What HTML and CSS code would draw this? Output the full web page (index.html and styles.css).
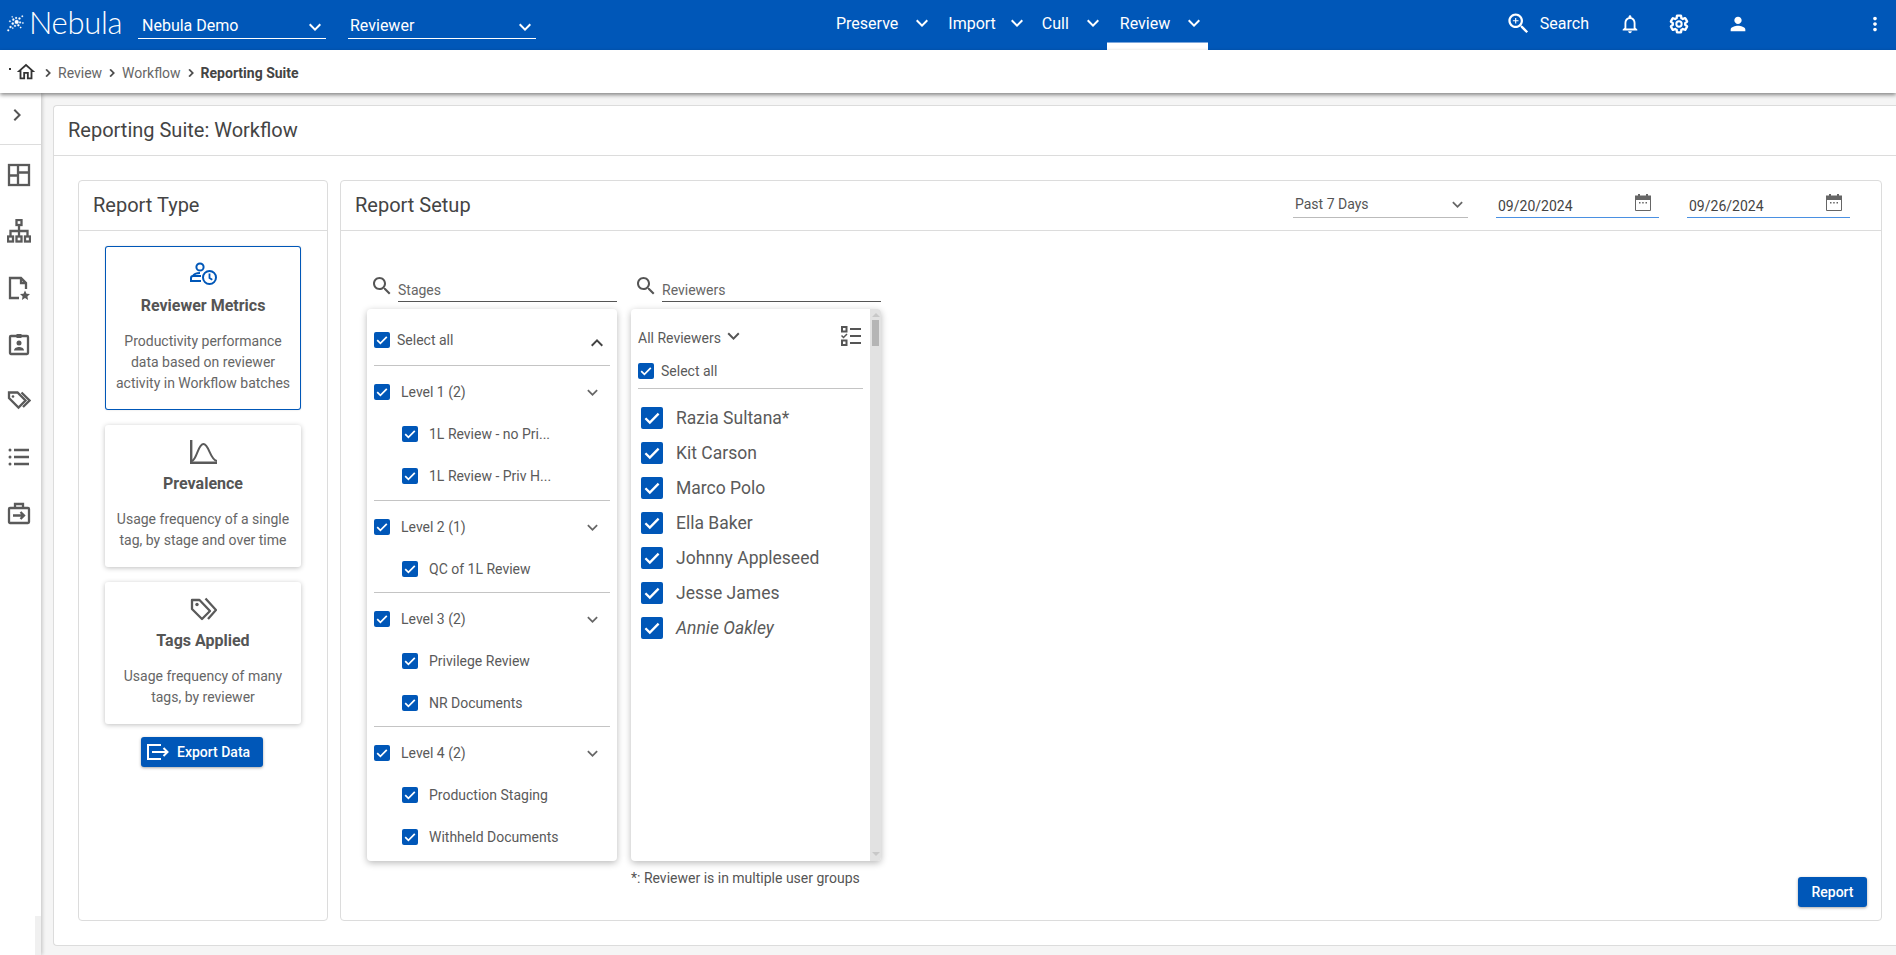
FILE: index.html
```html
<!DOCTYPE html>
<html lang="en">
<head>
<meta charset="utf-8">
<title>Reporting Suite: Workflow</title>
<link rel="stylesheet" href="styles.css">
</head>
<body>
<svg class="defs" aria-hidden="true">
  <symbol id="chev-down" viewBox="6 8 12 8"><path d="M16.59 8.59L12 13.17 7.41 8.59 6 10l6 6 6-6z"/></symbol>
  <symbol id="chev-up" viewBox="6 8 12 8"><path d="M12 8l-6 6 1.41 1.41L12 10.83l4.59 4.58L18 14z"/></symbol>
  <symbol id="chev-right" viewBox="0 0 24 24"><path d="M10 6L8.59 7.41 13.17 12l-4.58 4.59L10 18l6-6z"/></symbol>
  <symbol id="search" viewBox="0 0 24 24"><path d="M15.5 14h-.79l-.28-.27C15.41 12.59 16 11.11 16 9.5 16 5.91 13.09 3 9.5 3S3 5.91 3 9.5 5.91 16 9.5 16c1.61 0 3.09-.59 4.23-1.57l.27.28v.79l5 4.99L20.49 19l-4.99-5zm-6 0C7.01 14 5 11.99 5 9.5S7.01 5 9.5 5 14 7.01 14 9.5 11.99 14 9.5 14z"/></symbol>
  <symbol id="check" viewBox="0 0 16 16"><path d="M3.2 8.2l3.2 3.2 6.4-6.6" fill="none" stroke="#fff" stroke-width="1.7"/></symbol>
  <symbol id="calendar" viewBox="0 0 16 17"><path d="M3 0h2v1.500h6V0h2v1.500h3V6H0V1.500h3z" fill="#666"/><path d="M.5 5v11.500h15V5" fill="none" stroke="#666"/><path d="M4 8h1.500v1.500H4zM7.200 8h1.500v1.500H7.200zM10.500 8H12v1.500h-1.500z" fill="#666"/></symbol>
</svg>

<header class="topbar">
  <div class="logo">
    <svg class="logo-mark" viewBox="0 0 16 16" aria-hidden="true">
      <g fill="#fff" stroke="#fff" stroke-width=".25">
        <circle cx="9.500" cy="7" r="1.700"/><circle cx="6.500" cy="5" r=".9"/><circle cx="6" cy="8.500" r="1"/><circle cx="9" cy="3.500" r=".8"/><circle cx="12" cy="4" r=".9"/><circle cx="12.500" cy="7.500" r=".8"/><circle cx="11" cy="10" r=".9"/><circle cx="8" cy="10.500" r=".8"/><circle cx="4" cy="11.500" r=".9"/><circle cx="3.500" cy="6.500" r=".7"/><circle cx="14.500" cy="2" r=".7"/><circle cx="2" cy="14.500" r=".8"/><circle cx="15" cy="8" r=".6"/><circle cx="6" cy="12.500" r=".6"/><circle cx="13" cy="12" r=".6"/><circle cx="5.500" cy="2.500" r=".5"/>
      </g>
    </svg>
    <span class="logo-text">Nebula</span>
  </div>
  <div class="top-select"><span>Nebula Demo</span><svg class="ic-chev"><use href="#chev-down"/></svg></div>
  <div class="top-select top-select--second"><span>Reviewer</span><svg class="ic-chev"><use href="#chev-down"/></svg></div>
  <nav class="tabs">
    <a class="tab">Preserve<svg class="ic-chev"><use href="#chev-down"/></svg></a>
    <a class="tab">Import<svg class="ic-chev"><use href="#chev-down"/></svg></a>
    <a class="tab">Cull<svg class="ic-chev"><use href="#chev-down"/></svg></a>
    <a class="tab tab--active">Review<svg class="ic-chev"><use href="#chev-down"/></svg></a>
  </nav>
  <div class="top-actions">
    <svg class="ic-search-top" viewBox="0 0 24 24"><path d="M15.5 14h-.79l-.28-.27C15.41 12.59 16 11.11 16 9.5 16 5.91 13.09 3 9.5 3S3 5.91 3 9.5 5.91 16 9.5 16c1.61 0 3.09-.59 4.23-1.57l.27.28v.79l5 4.99L20.49 19l-4.99-5zm-6 0C7.01 14 5 11.99 5 9.5S7.01 5 9.5 5 14 7.01 14 9.5 11.99 14 9.5 14z"/><path d="M12 10h-2v2H9v-2H7V9h2V7h1v2h2v1z"/></svg>
    <span class="search-label">Search</span>
    <svg class="ic-top ic-bell" viewBox="0 0 24 24"><path d="M12 22c1.100 0 2-.9 2-2h-4c0 1.100.9 2 2 2zm6-6v-5c0-3.070-1.630-5.640-4.500-6.320V4c0-.83-.67-1.500-1.500-1.500s-1.500.67-1.500 1.500v.68C7.640 5.360 6 7.920 6 11v5l-2 2v1h16v-1l-2-2zm-2 1H8v-6c0-2.480 1.510-4.500 4-4.500s4 2.020 4 4.500v6z"/></svg>
    <svg class="ic-top ic-gear" viewBox="0 0 24 24"><path fill="none" stroke="#fff" stroke-width="2.800" d="M19.430 12.980c.04-.32.07-.64.07-.98s-.03-.66-.07-.98l2.110-1.650c.19-.15.24-.42.12-.64l-2-3.460c-.12-.22-.39-.3-.61-.22l-2.490 1c-.52-.4-1.080-.73-1.690-.98l-.38-2.650C14.460 2.180 14.250 2 14 2h-4c-.25 0-.46.18-.49.42l-.38 2.650c-.61.25-1.170.59-1.690.98l-2.490-1c-.23-.09-.49 0-.61.22l-2 3.460c-.13.22-.07.49.12.64l2.110 1.650c-.04.32-.07.65-.07.98s.03.66.07.98l-2.110 1.650c-.19.15-.24.42-.12.64l2 3.460c.12.22.39.3.61.22l2.490-1c.52.4 1.080.73 1.690.98l.38 2.650c.03.24.24.42.49.42h4c.25 0 .46-.18.49-.42l.38-2.650c.61-.25 1.170-.59 1.690-.98l2.490 1c.23.09.49 0 .61-.22l2-3.460c.12-.22.07-.49-.12-.64l-2.110-1.650z"/><circle cx="12" cy="12" r="3.200" fill="none" stroke="#fff" stroke-width="2.400"/></svg>
    <svg class="ic-top ic-person" viewBox="0 0 24 24"><path d="M12 12c2.210 0 4-1.790 4-4s-1.790-4-4-4-4 1.790-4 4 1.790 4 4 4zm0 2c-2.670 0-8 1.340-8 4v2h16v-2c0-2.660-5.330-4-8-4z"/></svg>
    <svg class="ic-top ic-dots" viewBox="0 0 24 24"><path d="M12 8c1.100 0 2-.9 2-2s-.9-2-2-2-2 .9-2 2 .9 2 2 2zm0 2c-1.100 0-2 .9-2 2s.9 2 2 2 2-.9 2-2-.9-2-2-2zm0 6c-1.100 0-2 .9-2 2s.9 2 2 2 2-.9 2-2-.9-2-2-2z"/></svg>
  </div>
</header>

<div class="crumbs">
  <span class="crumb-dot"></span>
  <svg class="ic-home" viewBox="0 0 24 24"><path d="M12 5.690l5 4.500V18h-2v-6H9v6H7v-7.810l5-4.500M12 3L2 12h3v8h6v-6h2v6h6v-8h3L12 3z"/></svg>
  <svg class="ic-crumb"><use href="#chev-right"/></svg>
  <span>Review</span>
  <svg class="ic-crumb"><use href="#chev-right"/></svg>
  <span>Workflow</span>
  <svg class="ic-crumb"><use href="#chev-right"/></svg>
  <strong>Reporting Suite</strong>
</div>

<div class="workspace">
  <aside class="rail">
    <div class="rail-toggle"><svg class="ic-rail-chev"><use href="#chev-right"/></svg></div>
    <ul class="rail-list">
      <li><svg class="ic-rail" viewBox="0 0 24 24"><g fill="none" stroke="#5a5a5a" stroke-width="2"><rect x="2" y="2" width="20" height="20"/><path d="M11 2v20M2 12.500h9M11 9.500h11"/></g></svg></li>
      <li><svg class="ic-rail" viewBox="0 0 24 24"><g fill="none" stroke="#5a5a5a" stroke-width="2"><rect x="9.500" y="1" width="5" height="5"/><rect x="1" y="17.500" width="5" height="5"/><rect x="9.500" y="17.500" width="5" height="5"/><rect x="18" y="17.500" width="5" height="5"/><path d="M12 6v11.500M3.500 17.500V12h17v5.500"/></g></svg></li>
      <li><svg class="ic-rail" viewBox="0 0 24 24"><path fill="none" stroke="#5a5a5a" stroke-width="2" d="M12 22H3V2h11l5 5v6M14 2v5h5"/><path fill="#5a5a5a" d="M18 14.500l1.500 3.200 3.500.4-2.600 2.300.7 3.500-3.100-1.800-3.100 1.800.7-3.500-2.600-2.300 3.500-.4z"/></svg></li>
      <li><svg class="ic-rail" viewBox="0 0 24 24"><rect x="3" y="4" width="18" height="18" rx="1" fill="none" stroke="#5a5a5a" stroke-width="2"/><path fill="#5a5a5a" d="M9.500 2h5v4h-5z"/><circle cx="12" cy="11" r="2.500" fill="#5a5a5a"/><path fill="#5a5a5a" d="M7 18.500c0-2.500 3-3.500 5-3.500s5 1 5 3.500z"/></svg></li>
      <li><svg class="ic-rail" viewBox="0 0 24 24"><g fill="none" stroke="#5a5a5a" stroke-width="2"><path d="M2 4.500h8.500l8 8-7 7-9.500-9.500z"/><path d="M14.500 4.500l8 8-6.500 6.500"/></g><circle cx="6" cy="8.500" r="1.300" fill="#5a5a5a"/></svg></li>
      <li><svg class="ic-rail" viewBox="0 0 24 24"><path fill="none" stroke="#5a5a5a" stroke-width="2" d="M7 5h15M7 12h15M7 19h15"/><circle cx="3" cy="5" r="1.500" fill="#5a5a5a"/><circle cx="3" cy="12" r="1.500" fill="#5a5a5a"/><circle cx="3" cy="19" r="1.500" fill="#5a5a5a"/></svg></li>
      <li><svg class="ic-rail" viewBox="0 0 24 24"><g fill="none" stroke="#5a5a5a" stroke-width="2"><rect x="2" y="7" width="20" height="15" rx="1"/><path d="M8 7V3h8v4M6 14.500h11M13.500 11l3.500 3.500-3.500 3.500"/></g></svg></li>
    </ul>
  </aside>

  <main class="content">
    <section class="sheet">
      <h1 class="sheet-title">Reporting Suite: Workflow</h1>
      <div class="sheet-body">
        <section class="panel panel--type">
          <h2 class="panel-head">Report Type</h2>
          <div class="type-body">
            <div class="type-stack">
              <article class="type-card type-card--active">
                <svg class="type-icon" viewBox="0 0 27 24"><g fill="none" stroke="#0057b8" stroke-width="2"><circle cx="10" cy="5" r="3.600"/><path d="M11 14H3c-1.500 0-2 .8-2 2.200V19h10"/><path d="M3 14c1-2 4-3 7-3"/><circle cx="19.500" cy="15.500" r="6.500"/></g><path fill="none" stroke="#0057b8" stroke-width="1.800" d="M19.500 11.500v4.500l2.800 1.800"/></svg>
                <h3>Reviewer Metrics</h3>
                <p>Productivity performance<br>data based on reviewer<br>activity in Workflow batches</p>
              </article>
              <article class="type-card">
                <svg class="type-icon" viewBox="0 0 27 24"><path fill="none" stroke="#5a5a5a" stroke-width="2.400" d="M1.200 0v22.800h26"/><path fill="none" stroke="#5a5a5a" stroke-width="2" d="M2 21C7 19 8 4 13.500 4S20 20 27 21"/></svg>
                <h3>Prevalence</h3>
                <p>Usage frequency of a single<br>tag, by stage and over time</p>
              </article>
              <article class="type-card">
                <svg class="type-icon" viewBox="0 0 27 24"><g fill="none" stroke="#5a5a5a" stroke-width="2.300"><path d="M2 3v9l10 10 8-8L9.500 3z" stroke-linejoin="round"/><path d="M15.500 1.500l10.500 11.500-8 9"/></g><circle cx="7" cy="7.500" r="1.700" fill="#5a5a5a"/></svg>
                <h3>Tags Applied</h3>
                <p>Usage frequency of many<br>tags, by reviewer</p>
              </article>
            </div>
            <button class="btn btn--export" type="button">
              <svg class="ic-export" viewBox="0 0 22 16"><path fill="none" stroke="#fff" stroke-width="2" d="M14 1H1v14h13M5 8h15M16.500 4l4 4-4 4"/></svg>
              Export Data
            </button>
          </div>
        </section>

        <section class="panel panel--setup">
          <header class="setup-head">
            <h2>Report Setup</h2>
            <div class="filters">
              <div class="filter filter--range"><span>Past 7 Days</span><svg class="ic-chev-sm"><use href="#chev-down"/></svg></div>
              <div class="filter filter--date"><span>09/20/2024</span><svg class="ic-cal"><use href="#calendar"/></svg></div>
              <div class="filter filter--date"><span>09/26/2024</span><svg class="ic-cal"><use href="#calendar"/></svg></div>
            </div>
          </header>
          <div class="setup-body">
            <div class="pickers">
              <div class="picker">
                <div class="picker-search"><svg class="ic-search"><use href="#search"/></svg><span class="picker-input">Stages</span></div>
                <div class="list-card list-card--stages">
                  <div class="stage-all">
                    <span class="cb"><svg><use href="#check"/></svg></span><span>Select all</span>
                    <svg class="ic-chev-up"><use href="#chev-up"/></svg>
                  </div>
                  <div class="stage-group">
                    <div class="stage-row stage-row--level"><span class="cb"><svg><use href="#check"/></svg></span><span>Level 1 (2)</span><svg class="ic-chev-sm"><use href="#chev-down"/></svg></div>
                    <div class="stage-row stage-row--sub"><span class="cb"><svg><use href="#check"/></svg></span><span>1L Review - no Pri...</span></div>
                    <div class="stage-row stage-row--sub"><span class="cb"><svg><use href="#check"/></svg></span><span>1L Review - Priv H...</span></div>
                  </div>
                  <div class="stage-group stage-group--short">
                    <div class="stage-row stage-row--level"><span class="cb"><svg><use href="#check"/></svg></span><span>Level 2 (1)</span><svg class="ic-chev-sm"><use href="#chev-down"/></svg></div>
                    <div class="stage-row stage-row--sub"><span class="cb"><svg><use href="#check"/></svg></span><span>QC of 1L Review</span></div>
                  </div>
                  <div class="stage-group stage-group--short">
                    <div class="stage-row stage-row--level"><span class="cb"><svg><use href="#check"/></svg></span><span>Level 3 (2)</span><svg class="ic-chev-sm"><use href="#chev-down"/></svg></div>
                    <div class="stage-row stage-row--sub"><span class="cb"><svg><use href="#check"/></svg></span><span>Privilege Review</span></div>
                    <div class="stage-row stage-row--sub"><span class="cb"><svg><use href="#check"/></svg></span><span>NR Documents</span></div>
                  </div>
                  <div class="stage-group">
                    <div class="stage-row stage-row--level"><span class="cb"><svg><use href="#check"/></svg></span><span>Level 4 (2)</span><svg class="ic-chev-sm"><use href="#chev-down"/></svg></div>
                    <div class="stage-row stage-row--sub"><span class="cb"><svg><use href="#check"/></svg></span><span>Production Staging</span></div>
                    <div class="stage-row stage-row--sub"><span class="cb"><svg><use href="#check"/></svg></span><span>Withheld Documents</span></div>
                  </div>
                </div>
              </div>

              <div class="picker">
                <div class="picker-search"><svg class="ic-search"><use href="#search"/></svg><span class="picker-input">Reviewers</span></div>
                <div class="list-card list-card--reviewers">
                  <div class="rev-main">
                    <div class="rev-top">
                      <span class="rev-filter">All Reviewers<svg class="ic-chev-rev"><use href="#chev-down"/></svg></span>
                      <svg class="ic-checklist" viewBox="0 0 20 20"><g fill="none" stroke="#555" stroke-width="2"><rect x="1" y="1" width="4.500" height="4.500"/><rect x="1" y="14.500" width="4.500" height="4.500"/><path d="M9 3h11M9 10h11M9 17h11"/><path d="M.5 9.500l2 2 3.500-3.500" stroke-width="1.500"/></g></svg>
                    </div>
                    <div class="rev-all"><span class="cb"><svg><use href="#check"/></svg></span><span>Select all</span></div>
                    <ul class="rev-list">
                      <li><span class="cb cb--lg"><svg><use href="#check"/></svg></span>Razia Sultana*</li>
                      <li><span class="cb cb--lg"><svg><use href="#check"/></svg></span>Kit Carson</li>
                      <li><span class="cb cb--lg"><svg><use href="#check"/></svg></span>Marco Polo</li>
                      <li><span class="cb cb--lg"><svg><use href="#check"/></svg></span>Ella Baker</li>
                      <li><span class="cb cb--lg"><svg><use href="#check"/></svg></span>Johnny Appleseed</li>
                      <li><span class="cb cb--lg"><svg><use href="#check"/></svg></span>Jesse James</li>
                      <li class="rev-inactive"><span class="cb cb--lg"><svg><use href="#check"/></svg></span>Annie Oakley</li>
                    </ul>
                  </div>
                  <div class="scroll-track">
                    <span class="scroll-up"></span>
                    <span class="scroll-thumb"></span>
                    <span class="scroll-down"></span>
                  </div>
                </div>
                <p class="rev-note">*: Reviewer is in multiple user groups</p>
              </div>
            </div>
            <button class="btn btn--report" type="button">Report</button>
          </div>
        </section>
      </div>
    </section>
  </main>
</div>
</body>
</html>
```

FILE: styles.css
```css
* { box-sizing: border-box; }

html, body { height: 100%; }

body {
  margin: 0;
  display: flex;
  flex-direction: column;
  height: 100vh;
  overflow: hidden;
  font-family: Roboto, "Liberation Sans", sans-serif;
  font-size: 14px;
  color: #5a5a5a;
  background: #f5f5f5;
}

h1, h2, h3, p, ul { margin: 0; padding: 0; font-weight: 400; }
ul { list-style: none; }
svg { display: block; flex: none; }
.defs { position: absolute; width: 0; height: 0; }

/* top bar */
.topbar {
  flex: none;
  height: 50px;
  display: flex;
  align-items: flex-start;
  padding-right: 10px;
  background: #0057b8;
  color: #fff;
  fill: #fff;
  font-size: 16px;
}
.logo {
  width: 138px;
  height: 50px;
  display: flex;
  align-items: center;
  padding: 0 0 5px 6px;
}
.logo-mark { width: 18px; height: 18px; }
.logo-text {
  margin-left: 5px;
  font-family: Lato, "Open Sans", sans-serif;
  font-weight: 300;
  font-size: 31px;
  line-height: 1;
  letter-spacing: -.3px;
}
.top-select {
  width: 188px;
  height: 27px;
  margin-top: 12px;
  padding: 1px 0 0 4px;
  display: flex;
  align-items: center;
  justify-content: space-between;
  border-bottom: 1px solid #fff;
}
.top-select--second { margin-left: 22px; padding-left: 2px; }
.ic-chev { width: 12px; height: 8px; }
.top-select .ic-chev { margin: 3px 5px 0 0; }
.tabs { display: flex; height: 50px; margin-left: 287px; }
.tab {
  position: relative;
  height: 50px;
  display: flex;
  align-items: center;
  gap: 18px;
  padding: 0 8px 4px 13px;
}
.tab:first-child { padding-right: 7px; }
.tab:nth-child(2) { gap: 15px; padding-right: 6px; }
.tab--active::after {
  content: "";
  position: absolute;
  left: 0;
  right: 0;
  bottom: 0;
  height: 7px;
  background: #fff;
  border-top: 1px solid #7ba6dc;
}
.top-actions { margin-left: auto; height: 47px; display: flex; align-items: center; }
.ic-search-top { width: 27px; height: 27px; margin-top: -1px; }
.search-label { margin-left: 8px; }
.ic-top { width: 22px; height: 22px; }
.ic-bell { margin-left: 30px; }
.ic-gear { width: 20px; height: 20px; margin-left: 28px; }
.ic-person { margin-left: 38px; }
.ic-dots { margin-left: 115px; }

/* breadcrumb */
.crumbs {
  flex: none;
  position: relative;
  z-index: 3;
  height: 43px;
  display: flex;
  align-items: center;
  gap: 2px;
  padding: 2px 0 0 9px;
  background: #fff;
  color: #666;
  box-shadow: 0 2px 4px rgba(0, 0, 0, .45);
}
.crumbs strong { color: #444; font-weight: 700; }
.crumb-dot { width: 2px; height: 2px; margin: -7px 2px 0 0; background: #333; }
.ic-home { width: 22px; height: 22px; margin: -2px 1px 0 0; fill: #333; }
.ic-crumb { width: 16px; height: 16px; fill: #444; stroke: #444; stroke-width: .6px; }

/* workspace */
.workspace { flex: 1; min-height: 0; display: flex; }
.rail {
  flex: none;
  position: relative;
  z-index: 2;
  width: 41px;
  background: #fff;
  box-shadow: 1px 0 4px rgba(0, 0, 0, .22);
}
.rail::after {
  content: "";
  position: absolute;
  right: 0;
  bottom: 0;
  width: 6px;
  height: 39px;
  background: #f0f0f0;
}
.rail-toggle {
  height: 52px;
  padding: 10px 0 0 5px;
  border-bottom: 1px solid #ddd;
}
.ic-rail-chev { width: 24px; height: 24px; fill: #555; }
.rail-list { padding: 2px 0 0 7px; }
.rail-list li { height: 56.3px; display: flex; align-items: center; }
.ic-rail { width: 24px; height: 24px; }
.ic-rail [stroke] { stroke-width: 2.3px; }

.content { flex: 1; min-width: 0; padding: 12px 0 9px 12px; }
.sheet {
  height: 100%;
  display: flex;
  flex-direction: column;
  background: #fff;
  border: 1px solid #dcdcdc;
  border-right: 0;
  border-radius: 4px 0 0 4px;
}
.sheet-title {
  flex: none;
  height: 50px;
  padding-left: 14px;
  font-size: 20px;
  line-height: 48px;
  color: #444;
  border-bottom: 1px solid #dcdcdc;
}
.sheet-body {
  flex: 1;
  min-height: 0;
  display: flex;
  gap: 12px;
  padding: 24px 14px 24px 24px;
}
.panel {
  display: flex;
  flex-direction: column;
  border: 1px solid #dcdcdc;
  border-radius: 4px;
}
.panel--type { flex: none; width: 250px; }
.panel--setup { flex: 1; min-width: 0; }
.panel-head, .setup-head h2 { font-size: 20px; color: #444; }
.panel-head {
  height: 50px;
  padding-left: 14px;
  line-height: 48px;
  border-bottom: 1px solid #dcdcdc;
}

/* report types */
.type-body { display: flex; flex-direction: column; align-items: center; padding-top: 15px; }
.type-stack { display: flex; flex-direction: column; gap: 15px; }
.type-card {
  width: 196px;
  padding: 15px 8px 16px;
  text-align: center;
  background: #fff;
  border-radius: 3px;
  box-shadow: 0 1px 5px rgba(0, 0, 0, .25);
}
.type-card--active {
  padding: 16px 8px;
  box-shadow: inset 0 0 0 1px #0057b8, 0 0 2px rgba(0, 0, 0, .15);
}
.type-icon { width: 27px; height: 24px; margin: 0 auto 10px; }
.type-card h3 { font-size: 16px; line-height: 20px; font-weight: 700; color: #555; margin-bottom: 15px; }
.type-card p { font-size: 14px; line-height: 21px; color: #666; white-space: nowrap; }

.btn {
  display: flex;
  align-items: center;
  border: 0;
  border-radius: 3px;
  background: #0057b8;
  color: #fff;
  font: 500 14px Roboto, "Liberation Sans", sans-serif;
  box-shadow: 0 1px 3px rgba(0, 0, 0, .35);
}
.btn--export { width: 122px; height: 30px; margin: 13px 2px 0 0; padding: 0 0 0 6px; gap: 8px; }
.ic-export { width: 22px; height: 16px; }

/* setup */
.setup-head {
  flex: none;
  height: 50px;
  display: flex;
  align-items: center;
  justify-content: space-between;
  padding: 0 31px 0 12px;
  border-bottom: 1px solid #dcdcdc;
}
.setup-head h2 { padding: 0 0 2px 2px; }
.filters { display: flex; gap: 28px; align-self: flex-end; padding-bottom: 12px; }
.filter {
  height: 27px;
  display: flex;
  align-items: center;
  justify-content: space-between;
  color: #555;
}
.filter--range { width: 175px; padding: 0 5px 0 2px; border-bottom: 1px solid #bbb; }
.filter--date { width: 163px; padding: 3px 8px 0 2px; border-bottom: 1px solid #4a90e2; color: #444; }
.ic-cal { width: 16px; height: 17px; margin-top: -7px; }
.ic-chev-sm { width: 11px; height: 7px; fill: #666; }

.setup-body { flex: 1; min-height: 0; display: flex; flex-direction: column; padding: 41px 14px 13px 26px; }
.pickers { flex: 1; min-height: 0; display: flex; gap: 14px; }
.picker { width: 250px; }
.picker-search { height: 30px; display: flex; align-items: flex-end; margin-bottom: 7px; }
.ic-search { width: 24px; height: 24px; margin: 0 4px 4px 3px; fill: #555; }
.picker-input {
  flex: 1;
  height: 24px;
  line-height: 24px;
  color: #666;
  border-bottom: 1px solid #555;
}
.list-card {
  height: 552px;
  background: #fff;
  border-radius: 4px;
  box-shadow: 0 2px 7px rgba(0, 0, 0, .28);
  overflow: hidden;
}
.list-card--stages { padding: 0 7px; }
.cb {
  flex: none;
  width: 16px;
  height: 16px;
  border-radius: 2px;
  background: #0057b8;
}
.cb svg { width: 16px; height: 16px; }
.cb--lg { width: 22px; height: 22px; }
.cb--lg svg { width: 22px; height: 22px; }

.stage-all {
  height: 57px;
  display: flex;
  align-items: center;
  gap: 7px;
  padding-top: 6px;
  border-bottom: 1px solid #c4c4c4;
}
.ic-chev-up { width: 12px; height: 8px; margin: 5px 7px 0 auto; fill: #444; }
.stage-group { padding: 5px 0 3px; border-bottom: 1px solid #c4c4c4; }
.stage-group--short { padding-bottom: 2px; }
.stage-group:last-child { border-bottom: 0; }
.stage-row { height: 42px; display: flex; align-items: center; }
.stage-row--level { gap: 11px; }
.stage-row--level .ic-chev-sm { margin: 0 12px 0 auto; }
.stage-row--sub { gap: 11px; padding-left: 28px; }

.list-card--reviewers { display: flex; }
.rev-main { flex: 1; min-width: 0; padding: 0 7px; }
.rev-top { height: 42px; display: flex; align-items: center; justify-content: space-between; padding: 15px 2px 0 0; }
.rev-filter { display: flex; align-items: center; gap: 6px; }
.ic-chev-rev { width: 13px; height: 8px; margin-top: -3px; fill: #555; }
.ic-checklist { width: 20px; height: 20px; margin-top: -3px; }
.rev-all {
  height: 38px;
  display: flex;
  align-items: center;
  gap: 7px;
  padding-top: 2px;
  border-bottom: 1px solid #c4c4c4;
}
.rev-list { padding: 11px 0 0 3px; }
.rev-list li {
  height: 35px;
  display: flex;
  align-items: center;
  gap: 13px;
  font-size: 17.5px;
  color: #5a5a5a;
}
.rev-inactive { font-style: italic; }
.scroll-track {
  flex: none;
  width: 11px;
  display: flex;
  flex-direction: column;
  align-items: center;
  background: #e2e2e2;
}
.scroll-up {
  margin-top: 4px;
  border: 4px solid transparent;
  border-top: 0;
  border-bottom: 4px solid #c8c8c8;
}
.scroll-thumb { width: 7px; height: 26px; margin-top: 3px; background: #b5b5b5; }
.scroll-down {
  margin-top: auto;
  margin-bottom: 5px;
  border: 4px solid transparent;
  border-bottom: 0;
  border-top: 4px solid #c8c8c8;
}
.rev-note { margin-top: 8px; line-height: 18px; color: #555; }

.btn--report {
  flex: none;
  align-self: flex-end;
  justify-content: center;
  width: 69px;
  height: 30px;
  margin-top: -30px;
  position: relative;
}
```
